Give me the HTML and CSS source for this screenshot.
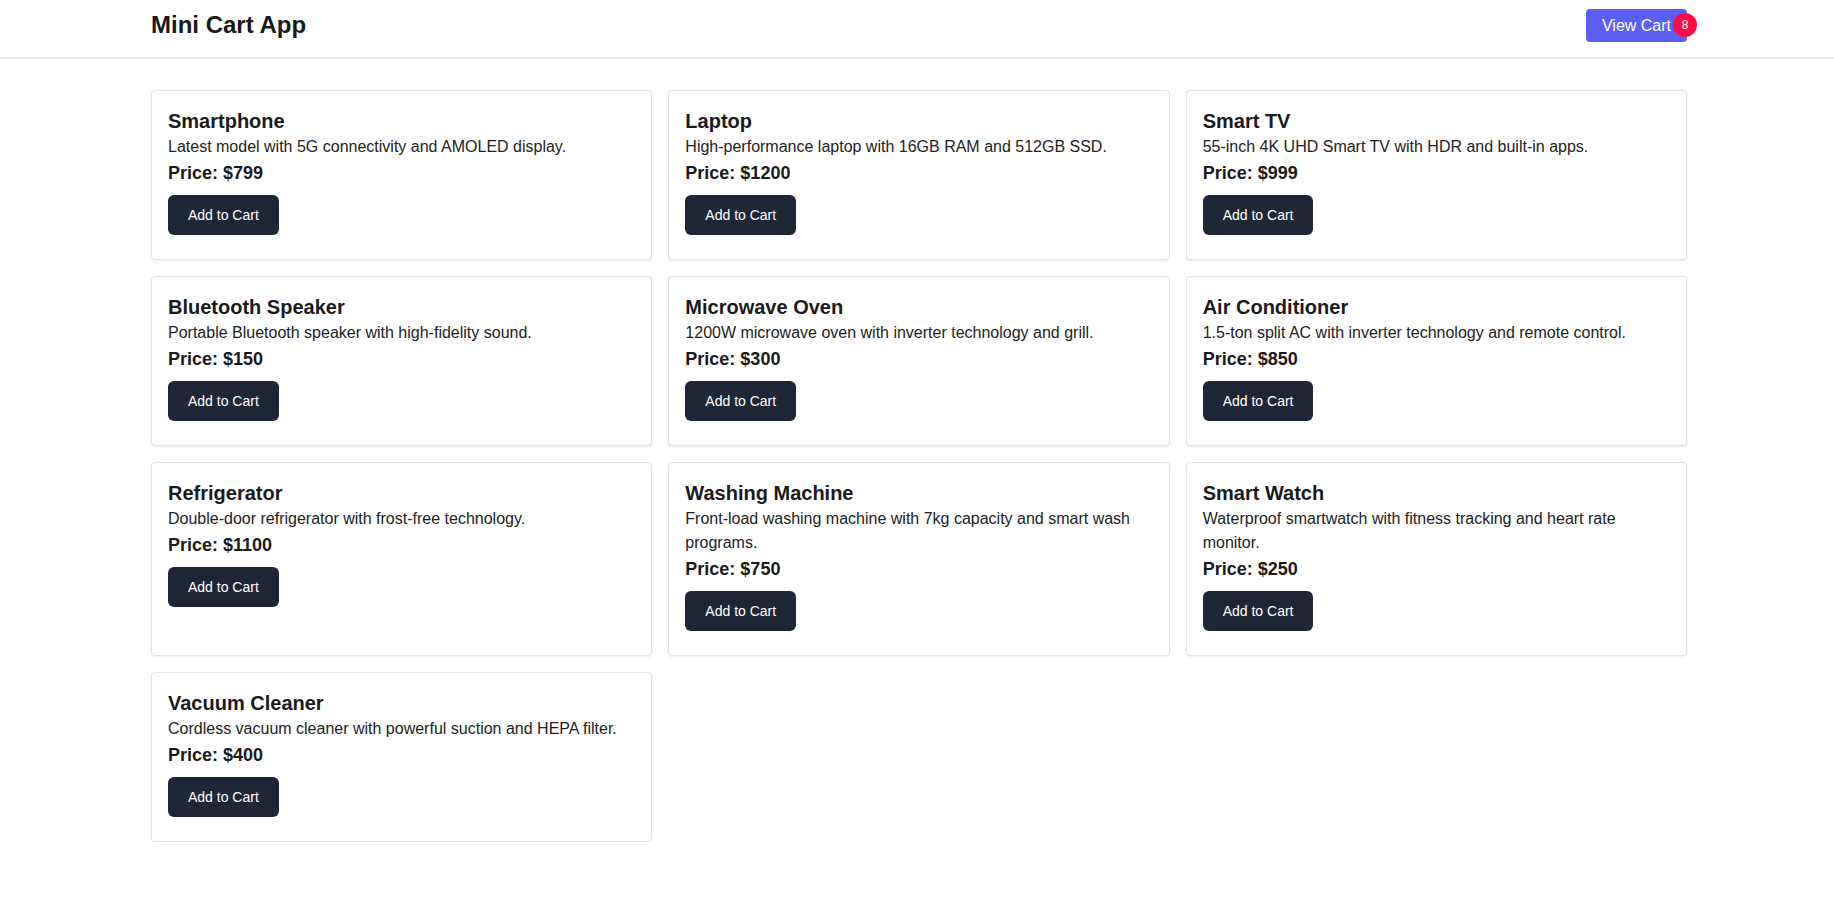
FILE: index.html
```html
<!DOCTYPE html>
<html lang="en">
<head>
<meta charset="utf-8">
<title>Mini Cart App</title>
<link rel="stylesheet" href="styles.css">
</head>
<body>
<header class="topbar">
  <div class="wrap topbar-inner">
    <h1 class="brand">Mini Cart App</h1>
    <button class="view-cart">View Cart<span class="badge">8</span></button>
  </div>
</header>
<main class="wrap products">
  <div class="card">
    <h2 class="card-title">Smartphone</h2>
    <p class="card-desc">Latest model with 5G connectivity and AMOLED display.</p>
    <p class="card-price">Price: $799</p>
    <button class="add-btn">Add to Cart</button>
  </div>
  <div class="card">
    <h2 class="card-title">Laptop</h2>
    <p class="card-desc">High-performance laptop with 16GB RAM and 512GB SSD.</p>
    <p class="card-price">Price: $1200</p>
    <button class="add-btn">Add to Cart</button>
  </div>
  <div class="card">
    <h2 class="card-title">Smart TV</h2>
    <p class="card-desc">55-inch 4K UHD Smart TV with HDR and built-in apps.</p>
    <p class="card-price">Price: $999</p>
    <button class="add-btn">Add to Cart</button>
  </div>
  <div class="card">
    <h2 class="card-title">Bluetooth Speaker</h2>
    <p class="card-desc">Portable Bluetooth speaker with high-fidelity sound.</p>
    <p class="card-price">Price: $150</p>
    <button class="add-btn">Add to Cart</button>
  </div>
  <div class="card">
    <h2 class="card-title">Microwave Oven</h2>
    <p class="card-desc">1200W microwave oven with inverter technology and grill.</p>
    <p class="card-price">Price: $300</p>
    <button class="add-btn">Add to Cart</button>
  </div>
  <div class="card">
    <h2 class="card-title">Air Conditioner</h2>
    <p class="card-desc">1.5-ton split AC with inverter technology and remote control.</p>
    <p class="card-price">Price: $850</p>
    <button class="add-btn">Add to Cart</button>
  </div>
  <div class="card">
    <h2 class="card-title">Refrigerator</h2>
    <p class="card-desc">Double-door refrigerator with frost-free technology.</p>
    <p class="card-price">Price: $1100</p>
    <button class="add-btn">Add to Cart</button>
  </div>
  <div class="card">
    <h2 class="card-title">Washing Machine</h2>
    <p class="card-desc">Front-load washing machine with 7kg capacity and smart wash programs.</p>
    <p class="card-price">Price: $750</p>
    <button class="add-btn">Add to Cart</button>
  </div>
  <div class="card">
    <h2 class="card-title">Smart Watch</h2>
    <p class="card-desc">Waterproof smartwatch with fitness tracking and heart rate monitor.</p>
    <p class="card-price">Price: $250</p>
    <button class="add-btn">Add to Cart</button>
  </div>
  <div class="card">
    <h2 class="card-title">Vacuum Cleaner</h2>
    <p class="card-desc">Cordless vacuum cleaner with powerful suction and HEPA filter.</p>
    <p class="card-price">Price: $400</p>
    <button class="add-btn">Add to Cart</button>
  </div>
</main>
</body>
</html>
```
FILE: styles.css
```css
* { box-sizing: border-box; }

html, body {
  margin: 0;
  padding: 0;
  background: #ffffff;
  font-family: "Liberation Sans", Arial, sans-serif;
  color: #1a1a1a;
}

.wrap {
  width: 1536px;
  margin-left: 151px;
}

.topbar {
  background: #ffffff;
  border-bottom: 2px solid #e8e8e8;
  height: 59px;
}

.topbar-inner {
  display: flex;
  justify-content: space-between;
  align-items: flex-start;
  padding-top: 9px;
}

.brand {
  margin: 0;
  font-size: 24px;
  line-height: 32px;
  font-weight: 700;
  color: #1a1a1a;
}

.view-cart {
  position: relative;
  height: 33px;
  padding: 0 16px;
  border: none;
  border-radius: 4px;
  background: #5b5ff4;
  color: #ffffff;
  font-family: "Liberation Sans", Arial, sans-serif;
  font-size: 16px;
  line-height: 33px;
}

.badge {
  position: absolute;
  top: 4px;
  right: -10px;
  width: 24px;
  height: 24px;
  border-radius: 50%;
  background: #ff0a47;
  color: #ffffff;
  font-size: 12px;
  line-height: 24px;
  text-align: center;
}

.products {
  display: grid;
  grid-template-columns: repeat(3, 1fr);
  gap: 16px;
  padding-top: 31px;
}

.card {
  border: 1px solid #e3e3e3;
  border-radius: 4px;
  background: #ffffff;
  box-shadow: 0 1px 3px rgba(0, 0, 0, 0.08);
  padding: 16px;
}

.card-title {
  margin: 0;
  font-size: 20px;
  line-height: 28px;
  font-weight: 700;
  color: #1a1a1a;
}

.card-desc {
  margin: 0;
  font-size: 16px;
  line-height: 24px;
  color: #222222;
}

.card-price {
  margin: 0;
  font-size: 18px;
  line-height: 28px;
  font-weight: 700;
  color: #1a1a1a;
}

.add-btn {
  margin: 8px 0;
  height: 40px;
  padding: 0 20px;
  border: none;
  border-radius: 6px;
  background: #1f2638;
  color: #ffffff;
  font-family: "Liberation Sans", Arial, sans-serif;
  font-size: 14px;
  line-height: 40px;
}
```
